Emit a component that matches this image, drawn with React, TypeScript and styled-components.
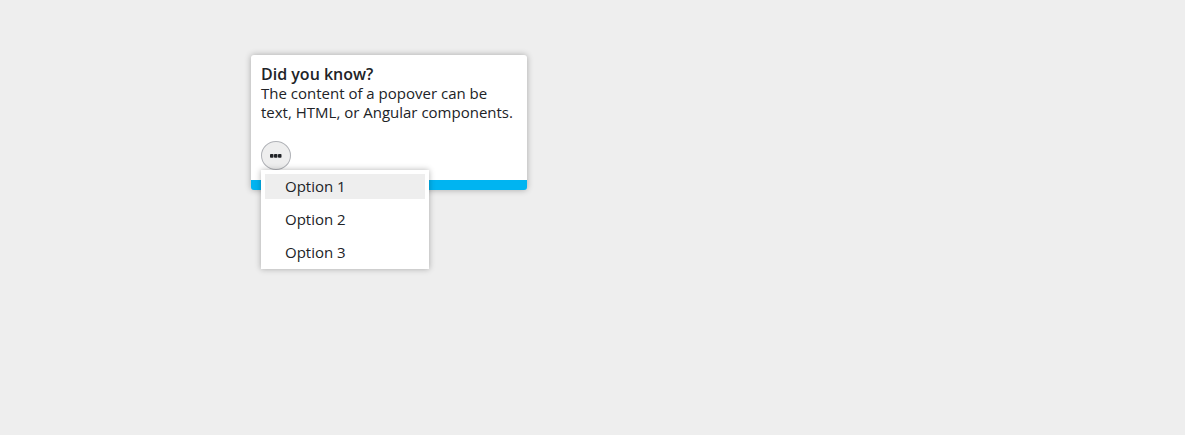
import React from 'react';
import styled, { createGlobalStyle } from 'styled-components';

const GlobalStyle = createGlobalStyle`
  *, *::before, *::after { box-sizing: border-box; }
  body {
    margin: 0;
    background: #eeeeee;
    color: #212327;
    font-family: "Open Sans", "Noto Sans", sans-serif;
    font-size: 15px;
    line-height: 19px;
  }
  button { font: inherit; color: inherit; }
`;

const Page = styled.main`
  display: flex;
  align-items: flex-start;
  min-height: 100vh;
  padding: 55px 20px 20px 251px;
`;

const Popover = styled.section`
  flex: 0 1 276px;
  padding: 9px 10px 10px;
  background: #ffffff;
  border-bottom: 10px solid #00b4f1;
  border-radius: 3px;
  box-shadow: 0 0 6px rgba(0, 0, 0, 0.3);
`;

const Title = styled.h1`
  margin: 0;
  font-size: 16px;
  font-weight: 600;
  line-height: 20px;
`;

const Content = styled.p`
  margin: 0 0 19px;
`;

const Dropdown = styled.div`
  position: relative;
  display: flex;
`;

const Trigger = styled.button`
  display: flex;
  align-items: center;
  justify-content: center;
  width: 30px;
  height: 29px;
  padding: 0;
  border: 1px solid #b0b2b7;
  border-radius: 50%;
  background: #eeeeee;
`;

const Menu = styled.div`
  position: absolute;
  top: 100%;
  left: 0;
  display: flex;
  flex-direction: column;
  gap: 8px;
  width: 168px;
  padding: 4px;
  background: #ffffff;
  box-shadow: 0 0 6px rgba(0, 0, 0, 0.3);
`;

const MenuItem = styled.button<{ $active?: boolean }>`
  padding: 3px 20px;
  border: 0;
  background: ${({ $active }) => ($active ? '#eeeeee' : 'transparent')};
  text-align: left;
`;

const options = ['Option 1', 'Option 2', 'Option 3'];

export default function App() {
  return (
    <>
      <GlobalStyle />
      <Page>
        <Popover aria-labelledby="popover-title">
          <Title id="popover-title">Did you know?</Title>
          <Content>The content of a popover can be text, HTML, or Angular components.</Content>
          <Dropdown>
            <Trigger type="button" aria-label="Context menu" aria-haspopup="menu" aria-expanded="true">
              <svg width="12" height="4" viewBox="0 0 12 4" fill="#212327" aria-hidden="true">
                <rect x="0" y="0" width="3.5" height="3.7" rx="0.8" />
                <rect x="4" y="0" width="3.5" height="3.7" rx="0.8" />
                <rect x="8" y="0" width="3.5" height="3.7" rx="0.8" />
              </svg>
            </Trigger>
            <Menu role="menu">
              {options.map((option, index) => (
                <MenuItem key={option} type="button" role="menuitem" $active={index === 0}>
                  {option}
                </MenuItem>
              ))}
            </Menu>
          </Dropdown>
        </Popover>
      </Page>
    </>
  );
}
